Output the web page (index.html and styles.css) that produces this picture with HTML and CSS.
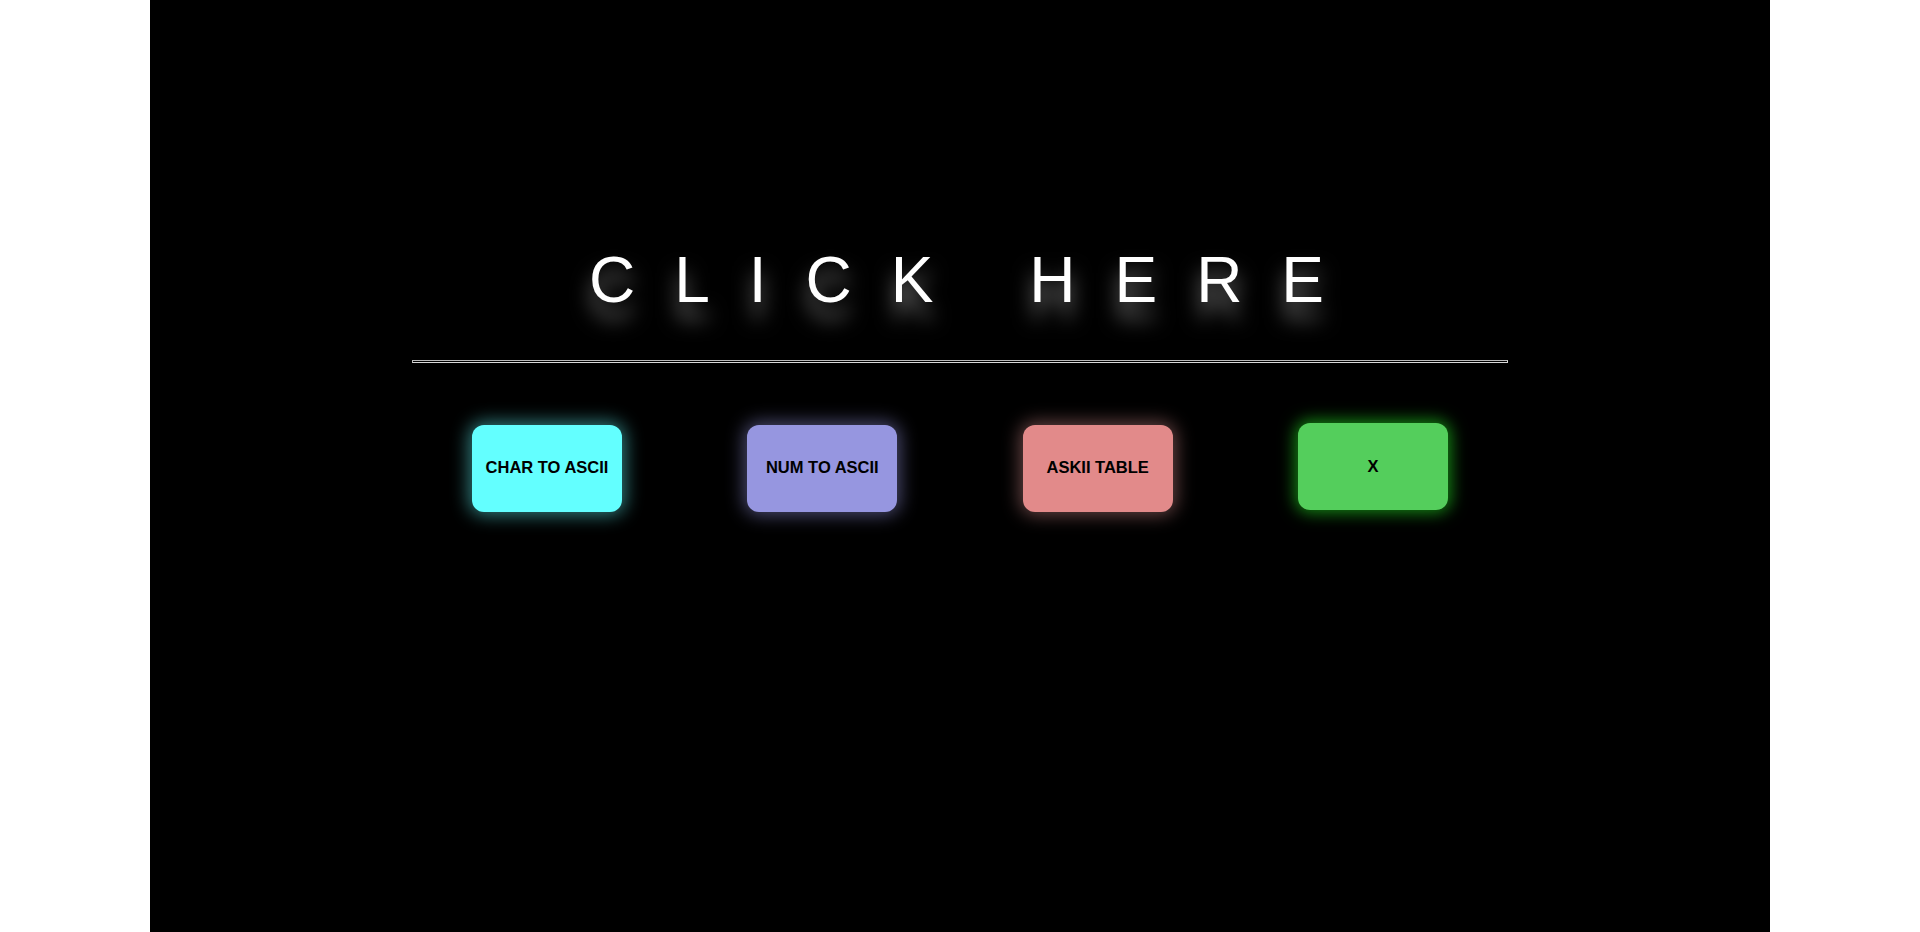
FILE: index.html
```html
<!DOCTYPE html>
<html lang="en">
<head>
<meta charset="utf-8">
<title>ASCII</title>
<link rel="stylesheet" href="styles.css">
</head>
<body>
<main class="page">
  <h1 class="title">CLICK HERE</h1>
  <div class="divider"></div>
  <nav class="actions">
    <button class="btn btn-cyan">CHAR TO ASCII</button>
    <button class="btn btn-violet">NUM TO ASCII</button>
    <button class="btn btn-rose">ASKII TABLE</button>
    <button class="btn btn-green btn-raised">X</button>
  </nav>
</main>
</body>
</html>
```
FILE: styles.css
```css
html, body {
  margin: 0;
  padding: 0;
  background: #ffffff;
}

body {
  font-family: "Liberation Sans", Arial, sans-serif;
}

.page {
  width: 1620px;
  min-height: 932px;
  margin: 0 auto;
  background: #000000;
  padding-top: 243px;
  box-sizing: border-box;
  display: flex;
  flex-direction: column;
  align-items: center;
}

.title {
  margin: 0;
  padding-left: 32px;
  font-family: "Liberation Sans", Arial, sans-serif;
  font-weight: 400;
  font-size: 64px;
  line-height: normal;
  letter-spacing: 39px;
  color: #ffffff;
  text-align: center;
  text-shadow: 0 16px 20px rgba(255, 255, 255, 0.5);
}

.divider {
  width: 1096px;
  height: 3px;
  box-sizing: border-box;
  margin-top: 43px;
  border-top: 1px solid #b8b8b8;
  border-bottom: 1px solid #d8d8d8;
  border-left: 1px solid #b8b8b8;
  border-right: 1px solid #d8d8d8;
}

.actions {
  display: flex;
  gap: 125.33px;
  margin-top: 62px;
  align-items: flex-start;
}

.btn {
  width: 150px;
  height: 87px;
  border: none;
  border-radius: 12px;
  font-family: "Liberation Sans", Arial, sans-serif;
  font-weight: 700;
  font-size: 16.5px;
  color: #000000;
  display: flex;
  align-items: center;
  justify-content: center;
  padding: 0 0 3px;
  cursor: pointer;
}

.btn-cyan {
  background: #63ffff;
  box-shadow: 0 0 18px 3px rgba(90, 230, 230, 0.55);
}

.btn-violet {
  background: #9696e0;
  box-shadow: 0 0 18px 3px rgba(150, 150, 224, 0.5);
}

.btn-rose {
  background: #e28a8a;
  box-shadow: 0 0 18px 3px rgba(226, 150, 150, 0.45);
}

.btn-green {
  background: #54ce5c;
  box-shadow: 0 0 16px 3px rgba(30, 190, 30, 0.7);
}

.btn-raised {
  transform: translateY(-2px);
  padding-bottom: 0;
}
```
